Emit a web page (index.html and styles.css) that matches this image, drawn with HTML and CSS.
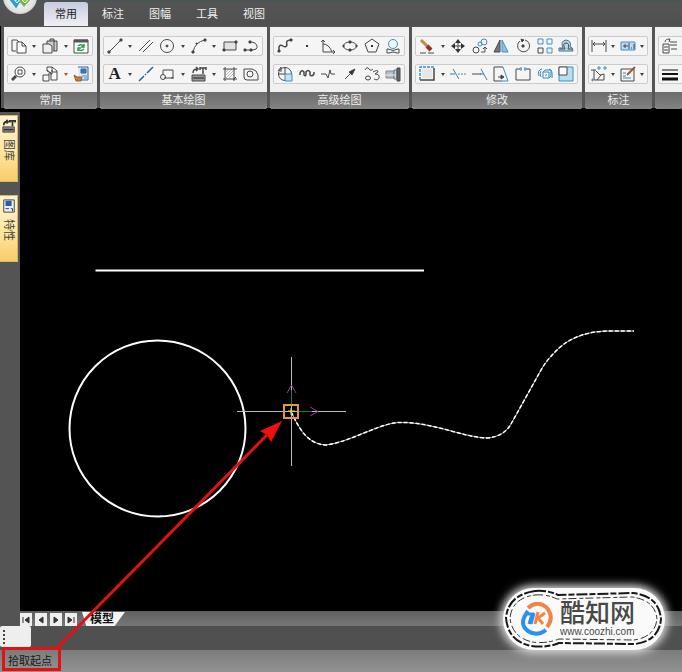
FILE: index.html
```html
<!DOCTYPE html>
<html lang="zh-CN">
<head>
    <meta charset="UTF-8">
    <meta name="viewport" content="width=device-width, initial-scale=1.0">
    <title>CAD</title>
    <link rel="stylesheet" href="styles.css">
</head>
<body>
    <header class="header">
        <button class="app-logo" aria-label="菜单">
            <svg width="34" height="34" viewBox="0 0 34 34">
                <path d="M7 17l6 8 5-8" stroke="#2f9fd0" stroke-width="4"/>
                <path d="M16 18l5 6 7-8" stroke="#79b843" stroke-width="4"/>
                <path d="M9 17l5 6 4-5M17 18l5 5 5-6" stroke="#fff" stroke-width="1"/>
            </svg>
        </button>
        <nav class="tabs">
            <button class="tab active">常用</button>
            <button class="tab">标注</button>
            <button class="tab">图幅</button>
            <button class="tab">工具</button>
            <button class="tab">视图</button>
        </nav>
    </header>

    <div class="ribbon">
        <section class="panel">
            <div class="panel-body">
                <div class="group">
                    <button class="icon" aria-label="复制"><svg viewBox="0 0 16 16"><path d="M5 13H1V2h5l2 2"/><path d="M6 4h5l4 4v7H6zM11 4v4h4" fill="#fff"/></svg></button>
                    <button class="caret" aria-label="更多"></button>
                    <button class="icon" aria-label="粘贴"><svg viewBox="0 0 16 16"><path d="M5 6V3h3V1h4v2h3v10h-4" fill="#ccc"/><path d="M1 6h6l3 2v7H1z" fill="#eee"/><path d="M12 3v10M8 3h5"/></svg></button>
                    <button class="caret" aria-label="更多"></button>
                    <button class="icon" aria-label="刷新"><svg viewBox="0 0 16 16"><path d="M1 2h14v13H1z" fill="#fff"/><path d="M1 3h14" stroke="#555" stroke-width="3"/><path d="M5 8q3-3 6 1M11 6v3H8M11 11q-3 3-6 0M5 13v-3h3" stroke="#249b53" stroke-width="1.5"/></svg></button>
                </div>
                <div class="group">
                    <button class="icon" aria-label="显示窗口"><svg viewBox="0 0 16 16"><circle cx="9" cy="6" r="5" fill="#fff"/><path d="M7 4h4v4H7z"/><path d="M5 10l-4 4" stroke-width="3"/></svg></button>
                    <button class="caret" aria-label="更多"></button>
                    <button class="icon" aria-label="移动复制"><svg viewBox="0 0 16 16"><path d="M5 1h5l5 4v9H9V7L5 5z" fill="#fff"/><path d="M1 9h6v6H1zM10 1v5h5M5 4l5 4M10 4v4H6"/></svg></button>
                    <button class="caret warm" aria-label="更多"></button>
                    <button class="icon" aria-label="特性匹配"><svg viewBox="0 0 16 16"><path d="M5 1h10v13H6" fill="#dbe9f6" stroke="#35669b"/><path d="M8 3h5v4H8z" fill="#3979bb" stroke="#35669b"/><path d="M9 10h5M11 12h3" class="b"/><path d="M1 9l3 2h5l-1 4H3z" fill="#c77e38" stroke="#9b5a27"/></svg></button>
                </div>
            </div>
            <h2 class="panel-title">常用</h2>
        </section>

        <section class="panel">
            <div class="panel-body">
                <div class="group">
                    <button class="icon" aria-label="直线"><svg viewBox="0 0 16 16"><path d="M2 14L14 2"/><path d="M1 13h2v2H1zM13 1h2v2h-2z" class="f"/></svg></button>
                    <button class="caret" aria-label="更多"></button>
                    <button class="icon" aria-label="平行线"><svg viewBox="0 0 16 16"><path d="M1 13L12 2M5 14L15 4"/></svg></button>
                    <button class="icon" aria-label="圆"><svg viewBox="0 0 16 16"><circle cx="8" cy="8" r="6.5"/><circle cx="8" cy="8" r="1" class="f"/></svg></button>
                    <button class="caret" aria-label="更多"></button>
                    <button class="icon" aria-label="圆弧"><svg viewBox="0 0 16 16"><path d="M2 14Q4 4 14 2"/><path d="M1 13h2v2H1zM13 1h2v2h-2zM5 5h1v1H5z" class="f"/></svg></button>
                    <button class="caret" aria-label="更多"></button>
                    <button class="icon" aria-label="矩形"><svg viewBox="0 0 16 16"><path d="M2 4h12v8H2z" fill="#e2e2e2"/><path d="M1 11h2v2H1zM13 3h2v2h-2z" class="f"/></svg></button>
                    <button class="icon" aria-label="多段线"><svg viewBox="0 0 16 16"><path d="M2 12h6M8 12q7 0 6-4-1-4-7-4"/><path d="M1 11h2v2H1zM7 11h2v2H7zM6 3h2v2H6z" class="f"/></svg></button>
                </div>
                <div class="group">
                    <button class="icon letter" aria-label="文字">A</button>
                    <button class="caret" aria-label="更多"></button>
                    <button class="icon" aria-label="中心线"><svg viewBox="0 0 16 16"><path d="M1 15l5-5M7 9l1-1M9 7l6-6" stroke="#2c5f9e" stroke-width="1.5"/></svg></button>
                    <button class="icon" aria-label="引出块"><svg viewBox="0 0 16 16"><path d="M4 9V4h10v8H5M12 12h3"/><circle cx="4" cy="11" r="2.5"/></svg></button>
                    <button class="caret" aria-label="更多"></button>
                    <button class="icon" aria-label="图库"><svg viewBox="0 0 16 16"><path d="M1 9h13v6H1z" fill="#999"/><path d="M2 12h11M2 7q0-4 4-4M5 1l2 2-2 2M9 2h6M12 2v6M9 1v3M15 1v3" stroke-width="1.5"/></svg></button>
                    <button class="caret" aria-label="更多"></button>
                    <button class="icon" aria-label="剖面线"><svg viewBox="0 0 16 16"><path d="M4 6l3-3M4 9l6-6M4 12l8-8M7 12l5-5" stroke="#bbb"/><path d="M3 1v14M12 1v14M1 3h14M1 13h14M11 14l3-3"/></svg></button>
                    <button class="icon" aria-label="轮廓"><svg viewBox="0 0 16 16"><path d="M1 3h8q5 1 6 6v5H4q-3 0-3-3z"/><circle cx="7" cy="8" r="3"/></svg></button>
                </div>
            </div>
            <h2 class="panel-title">基本绘图</h2>
        </section>

        <section class="panel">
            <div class="panel-body">
                <div class="group">
                    <button class="icon" aria-label="样条"><svg viewBox="0 0 16 16"><path d="M2 14V9q1-3 4-1t4-1q-2-5 4-5" stroke-width="1.5"/><path d="M1 12h2v2H1zM13 1h2v2h-2z" class="f"/></svg></button>
                    <button class="icon" aria-label="点"><svg viewBox="0 0 16 16"><path d="M7 7h2v2H7z" class="f" stroke="none"/></svg></button>
                    <button class="icon" aria-label="公式曲线"><svg viewBox="0 0 16 16"><path d="M3 2v12h12M3 6q6 0 9 8M1 4l2-2 2 2M13 12l2 2-2 2"/></svg></button>
                    <button class="icon" aria-label="椭圆"><svg viewBox="0 0 16 16"><ellipse cx="8" cy="8" rx="6.5" ry="4"/><path d="M7 3h2v2H7zM1 7h1v2H1zM14 7h1v2h-1zM7 11h2v2H7z" class="f"/></svg></button>
                    <button class="icon" aria-label="正多边形"><svg viewBox="0 0 16 16"><path d="M8 1l7 5-3 8H4L1 6z"/><path d="M7 7h2v2H7z" class="f" stroke="none"/></svg></button>
                    <button class="icon" aria-label="圆弧拟合"><svg viewBox="0 0 16 16"><circle cx="8" cy="6" r="4.5" class="b" fill="#eef7fd"/><path d="M2 15v-4h1q5 3 10 0h1v4M2 15h2q4-2 8 0h2"/></svg></button>
                </div>
                <div class="group">
                    <button class="icon" aria-label="局部放大"><svg viewBox="0 0 16 16"><circle cx="8" cy="8" r="6.5"/><path d="M8 8h7v7H8z" fill="#bfe2f4" class="b"/><path d="M1 5l3-4v5M8 1v7M1 8h7"/></svg></button>
                    <button class="icon" aria-label="波浪线"><svg viewBox="0 0 16 16"><path d="M1 9V7q2-4 4-1v3q2 2 2-1V6q2-3 4 0v3q2 2 4-1V6" stroke-width="1.5"/></svg></button>
                    <button class="icon" aria-label="双折线"><svg viewBox="0 0 16 16"><path d="M1 8h5l2 4 2-8 1 4h4"/></svg></button>
                    <button class="icon" aria-label="箭头"><svg viewBox="0 0 16 16"><path d="M3 13l6-6"/><path d="M13 3L7 6l3 3z" class="f"/></svg></button>
                    <button class="icon" aria-label="云线"><svg viewBox="0 0 16 16"><path d="M1 4q2-4 4-1t4 0M9 6q5-3 5 0l-3 2q5 0 4 4-1 3-5 1"/><ellipse cx="4" cy="12" rx="2.5" ry="2"/></svg></button>
                    <button class="icon" aria-label="孔轴"><svg viewBox="0 0 16 16"><path d="M1 5h8v7H1z" fill="#b5bcc4" stroke="#888"/><path d="M9 4h3v9H9z" fill="#b9d8e9" stroke="#678"/><path d="M12 2h3v13h-3z" fill="#666"/><path d="M0 9h11" stroke="#eee"/></svg></button>
                </div>
            </div>
            <h2 class="panel-title">高级绘图</h2>
        </section>

        <section class="panel">
            <div class="panel-body">
                <div class="group">
                    <button class="icon" aria-label="删除"><svg viewBox="0 0 16 16"><path d="M2 2l7 7" stroke="#c08a4a" stroke-width="3"/><path d="M8 8l4 4" stroke="#8b3522" stroke-width="4"/><path d="M1 15h14" stroke-dasharray="6 2"/></svg></button>
                    <button class="caret" aria-label="更多"></button>
                    <button class="icon" aria-label="平移"><svg viewBox="0 0 16 16"><path d="M8 2v12M2 8h12"/><path d="M8 1l3 4H5zM8 15l3-4H5zM1 8l4-3v6zM15 8l-4-3v6z" class="f" stroke="none"/></svg></button>
                    <button class="icon" aria-label="平移复制"><svg viewBox="0 0 16 16"><circle cx="4" cy="12" r="3"/><circle cx="12" cy="4" r="3" class="b"/><circle cx="8" cy="6" r="2" class="b"/><path d="M9 14h4v-4M11 11l2-2 2 2"/></svg></button>
                    <button class="icon" aria-label="镜像"><svg viewBox="0 0 16 16"><path d="M7 2v12H1z" fill="#777"/><path d="M9 2v12h6z" fill="#8fc5e4" class="b"/></svg></button>
                    <button class="icon" aria-label="旋转"><svg viewBox="0 0 16 16"><path d="M10 2a6 6 0 1 1-5 1"/><path d="M6 1l3 1-2 2zM7 7h2v2H7z" class="f"/></svg></button>
                    <button class="icon" aria-label="阵列"><svg viewBox="0 0 16 16"><path d="M1 1h5v5H1zM10 1h5v5h-5zM10 10h5v5h-5z" class="b"/><path d="M1 10h5v5H1z"/></svg></button>
                    <button class="icon" aria-label="等距线"><svg viewBox="0 0 16 16"><path d="M1 13v-3h4Q2 3 8 2q6 1 4 7 3 0 3 4z" fill="#b4d9ea" stroke="#38739b"/><path d="M2 11h5Q4 5 8 5q4 0 2 6h4"/></svg></button>
                </div>
                <div class="group">
                    <button class="icon" aria-label="裁剪"><svg viewBox="0 0 16 16"><path d="M1 14V1h14" stroke="#3a91c5" stroke-width="1.5" stroke-dasharray="3 1"/><path d="M15 2v12H1" stroke-width="1.5"/><path d="M3 3h10v9H3z" fill="#e6e6e6" stroke="none"/></svg></button>
                    <button class="caret" aria-label="更多"></button>
                    <button class="icon" aria-label="打断"><svg viewBox="0 0 16 16"><path d="M0 8h5M3 3l6 10" stroke="#387caf"/><path d="M8 8h8" stroke-dasharray="2 1" class="b"/></svg></button>
                    <button class="icon" aria-label="延伸"><svg viewBox="0 0 16 16"><path d="M0 8h9"/><path d="M8 8h4M9 3l6 11" stroke="#387caf"/></svg></button>
                    <button class="icon" aria-label="拉伸"><svg viewBox="0 0 16 16"><path d="M10 1H1v14h8"/><path d="M10 1l5 14H9" class="b"/><path d="M5 11h5M8 9l3 2-3 2z" class="f"/></svg></button>
                    <button class="icon" aria-label="打断于点"><svg viewBox="0 0 16 16"><path d="M5 3H1v11h14V3h-4"/><path d="M4 3h3M9 3h3M6 1v4M10 1v4" class="b"/></svg></button>
                    <button class="icon" aria-label="分解"><svg viewBox="0 0 16 16"><path d="M6 6h6v6H6zM6 6l2-2h6v6l-2 2M8 9h2" stroke="#2f8dbd"/><path d="M5 3Q0 4 2 10M4 5Q2 7 4 11M12 3q4 1 3 9" stroke="#2f8dbd"/></svg></button>
                    <button class="icon" aria-label="缩放"><svg viewBox="0 0 16 16"><path d="M1 1h14v14H1z" fill="#b8dff0" class="b"/><path d="M1 1h8v8H1z" fill="#fff"/></svg></button>
                </div>
            </div>
            <h2 class="panel-title">修改</h2>
        </section>

        <section class="panel">
            <div class="panel-body">
                <div class="group">
                    <button class="icon" aria-label="尺寸标注"><svg viewBox="0 0 16 16"><path d="M1 2v12M15 2v12M2 6h12M4 4L2 6l2 2M12 4l2 2-2 2"/></svg></button>
                    <button class="caret" aria-label="更多"></button>
                    <button class="icon" aria-label="形位公差"><svg viewBox="0 0 16 16"><path d="M1 4h14v8H1z" fill="#b8dcf1" class="b"/><path d="M3 8h5M5 6v4M9 5v6M11 10h1M14 6v5"/></svg></button>
                    <button class="caret" aria-label="更多"></button>
                </div>
                <div class="group">
                    <button class="icon" aria-label="坐标标注"><svg viewBox="0 0 16 16"><path d="M3 4v10h10V8L9 9 5 5M0 4h5M6 14l4-5"/><path d="M7 1h2v2H7zM13 1h2v2h-2zM1 13h1v2H1z" class="b"/></svg></button>
                    <button class="caret" aria-label="更多"></button>
                    <button class="icon" aria-label="标注编辑"><svg viewBox="0 0 16 16"><path d="M1 3h13v12H1z" fill="#f3f3f3"/><path d="M3 7h3M3 10h3M3 12h8" class="b"/><path d="M15 1L7 9" stroke="#985a38" stroke-width="2"/></svg></button>
                    <button class="caret" aria-label="更多"></button>
                </div>
            </div>
            <h2 class="panel-title">标注</h2>
        </section>

        <section class="panel cut">
            <div class="panel-body">
                <div class="group">
                    <button class="icon" aria-label="图层"><svg viewBox="0 0 16 16"><path d="M1 6h6v9H1zM2 9h4M2 12h4M8 4h7M8 7h7M9 11h6M3 4q0-3 5-3l-1 3"/></svg></button>
                </div>
                <div class="group">
                    <button class="icon" aria-label="线宽"><svg viewBox="0 0 16 16"><path d="M0 4h16" stroke="#111"/><path d="M0 8h16" stroke="#111" stroke-width="2"/><path d="M0 13h16" stroke="#111" stroke-width="3"/></svg></button>
                </div>
            </div>
            <h2 class="panel-title"></h2>
        </section>
    </div>

    <main class="workspace">
        <aside class="sidebar">
            <button class="side-tab">
                <svg viewBox="0 0 16 16"><path d="M1 9h13v6H1z" fill="#999"/><path d="M2 12h11M2 7q0-4 4-4M5 1l2 2-2 2M9 2h6M12 2v6M9 1v3M15 1v3" stroke-width="2"/></svg>
                <span>图库</span>
            </button>
            <button class="side-tab">
                <svg viewBox="0 0 16 16"><path d="M2 1h12v14H2z" fill="#e8eff8"/><path d="M4 2h7v6H4z" fill="#235fae" stroke="none"/><path d="M4 11h4M10 11h2v3"/></svg>
                <span>特性</span>
            </button>
        </aside>
        <div class="canvas">
            <svg width="662" height="499" viewBox="20 112 662 499">
                <path d="M95.500 270.500H424" stroke="#fff" stroke-width="2"/>
                <circle cx="157.500" cy="428.500" r="88" stroke="#fff" stroke-width="2"/>
                <!-- spline being edited -->
                <path d="M291 412C297 422 304 444 326 445C350 442 378 424 398 422.500C430 421 465 438 487 438C500 437 507 431 511 424L541 370C546 361 552 355 558 349C572 336 590 331 610 331H634" stroke="#bbb" stroke-width="1"/>
                <path d="M291 412C297 422 304 444 326 445C350 442 378 424 398 422.500C430 421 465 438 487 438C500 437 507 431 511 424L541 370C546 361 552 355 558 349C572 336 590 331 610 331H634" stroke="#fff" stroke-width="1.500" stroke-dasharray="4 2"/>
                <!-- crosshair with ucs axes -->
                <path d="M237 411.500H346M291.500 357V466" stroke="#bbb"/>
                <path d="M298 411.500H312M291.500 405V390" stroke="#197b32"/>
                <path d="M310 407l8 4.500-8 4.500M287 393l4.500-8 4.500 8" stroke="#8b3b98"/>
                <path d="M284 405h14v13h-14z" stroke="#e59a31" stroke-width="2"/>
                <path d="M288 411h7M291 408v7" stroke="#e4d34a"/>
            </svg>
        </div>
    </main>

    <div class="sheet-bar">
        <div class="sheet-nav">
            <button aria-label="第一页"><svg viewBox="0 0 12 12"><path d="M3 3v6M9 3L5 6l4 3z"/></svg></button>
            <button aria-label="上一页"><svg viewBox="0 0 12 12"><path d="M8 3L4 6l4 3z"/></svg></button>
            <button aria-label="下一页"><svg viewBox="0 0 12 12"><path d="M4 3l4 3-4 3z"/></svg></button>
            <button aria-label="最后一页"><svg viewBox="0 0 12 12"><path d="M9 3v6M3 3l4 3-4 3z"/></svg></button>
        </div>
        <button class="sheet-tab">模型</button>
    </div>
    <div class="toolbar-row">
        <div class="grip"></div>
    </div>
    <footer class="status-bar">拾取起点</footer>

    <svg class="annotation" width="300" height="260" viewBox="0 412 300 260">
        <path d="M3.500 648.500h56v21h-56z" stroke="#e01212" stroke-width="3"/>
        <path d="M57 648L267 435" stroke="#e01212" stroke-width="3"/>
        <path d="M282 421L271 442 267 435 260 431z" fill="#f01010"/>
    </svg>

    <div class="watermark">
        <svg class="stitch" width="162" height="62" viewBox="0 0 162 62">
            <path d="M32 3Q45 2 55 7L130 5Q156 8 158 31Q156 53 132 56L56 55Q44 60 28 58Q5 53 3 30Q5 7 32 3z" stroke="#181818" stroke-width="2" stroke-dasharray="11 2 6 2"/>
            <path d="M32 7Q44 6 54 11L129 9Q152 12 154 31Q152 49 131 52L56 51Q43 56 29 54Q9 49 7 30Q9 10 32 7z" stroke="#333" stroke-width="1" stroke-dasharray="8 3 4 2"/>
        </svg>
        <svg class="mark" width="32" height="34" viewBox="0 0 32 34">
            <path d="M7 6Q16-2 25 5Q34 15 26 25" stroke="#f58345" stroke-width="4"/>
            <path d="M7 9Q-3 22 7 29Q16 35 25 28" stroke="#2b91ec" stroke-width="4"/>
            <path d="M6 12h5l-3 10M13 11l-3 11" stroke="#2b91ec" stroke-width="3"/>
            <path d="M17 10l-3 12M24 11l-7 5 5 6" stroke="#f58345" stroke-width="3"/>
        </svg>
        <div class="brand">
            <strong>酷知网</strong>
            <span>www.coozhi.com</span>
        </div>
    </div>
</body>
</html>
```
FILE: styles.css
```css
* {
    box-sizing: border-box;
}

body {
    margin: 0;
    min-height: 100vh;
    display: flex;
    flex-direction: column;
    position: relative;
    overflow: hidden;
    background: #000;
    font-family: "Liberation Sans", "Noto Sans CJK SC", sans-serif;
    font-size: 11px;
    line-height: 16px;
}

button {
    margin: 0;
    padding: 0;
    border: none;
    background: none;
    font: inherit;
    color: inherit;
}

svg {
    display: block;
    fill: none;
}

/* header */
.header {
    position: relative;
    height: 26px;
    padding-left: 44px;
    background: linear-gradient(#4a5555, #545454 4px, #505050);
    display: flex;
    align-items: flex-end;
}

.app-logo {
    position: absolute;
    left: 3px;
    top: -20px;
    width: 34px;
    height: 34px;
    border-radius: 50%;
    background: radial-gradient(#fff, #e4e4e4 60%, #999);
}

.tabs {
    display: flex;
    gap: 3px;
    align-items: flex-end;
}

.tab {
    width: 44px;
    height: 24px;
    color: #f0f0f0;
}

.tab.active {
    color: #222;
    background: linear-gradient(#c6cbe0, #f0f0f4);
    border-radius: 3px 3px 0 0;
}

/* ribbon */
.ribbon {
    display: grid;
    grid-template-columns: 93px 167px 139px 170px 67px 1fr;
    gap: 3px;
    height: 86px;
    padding: 1px 0 3px 3px;
    background: linear-gradient(#555 82px, #000 82px);
    border-left: 1px solid #000;
}

.panel {
    min-width: 0;
    overflow: hidden;
    border-radius: 0 0 3px 3px;
    background: #f0f0f0;
    display: flex;
    flex-direction: column;
}

.panel-body {
    flex: 1;
    padding: 9px 4px 0 3px;
    display: flex;
    flex-direction: column;
    gap: 8px;
}

.group {
    height: 20px;
    display: flex;
    align-items: center;
    border: 1px solid #ccc;
    border-radius: 2px;
    background: #f5f5f5;
}

.icon {
    flex: 0 1 22px;
    min-width: 0;
    height: 18px;
    display: flex;
    align-items: center;
    justify-content: center;
}

.icon svg {
    flex: none;
    width: 16px;
    height: 16px;
    stroke: #484848;
    stroke-width: 1;
}

.icon .b {
    stroke: #3c91c4;
}

.icon .f {
    fill: #333;
}

.letter {
    font-family: "Liberation Serif", serif;
    font-size: 17px;
    font-weight: bold;
    color: #222;
}

.caret {
    flex: 0 1 10px;
    height: 18px;
    display: flex;
    align-items: center;
    justify-content: center;
}

.caret::before {
    content: "";
    border: 2px solid transparent;
    border-top: 3px solid #444;
    border-bottom: 0;
}

.caret.warm::before {
    border-top-color: #8b6530;
}

.panel-title {
    height: 17px;
    margin: 0;
    background: linear-gradient(#6c6c6c, #828282);
    color: #eee;
    font-size: 11px;
    font-weight: normal;
    text-align: center;
}

.cut .panel-body {
    padding-right: 0;
}

.cut .group {
    border-right: 0;
    border-radius: 2px 0 0 2px;
}

/* drawing area */
.workspace {
    flex: 1;
    display: flex;
    min-height: 0;
}

.sidebar {
    width: 20px;
    padding-top: 3px;
    background: #545454;
    display: flex;
    flex-direction: column;
    gap: 13px;
}

.side-tab {
    width: 18px;
    height: 67px;
    padding: 3px 1px;
    background: linear-gradient(#fff3cf, #ffe9a5 50%, #f8cd68);
    border: 1px solid #d9b765;
    border-left: 0;
    color: #444;
    display: flex;
    flex-direction: column;
    align-items: center;
    gap: 6px;
}

.side-tab svg {
    width: 14px;
    height: 14px;
    stroke: #333;
}

.side-tab span {
    writing-mode: vertical-rl;
    text-orientation: sideways;
}

.canvas {
    flex: 1;
    min-width: 0;
    overflow: hidden;
    background: #000;
}

/* bottom bars */
.sheet-bar {
    height: 15px;
    background: linear-gradient(#606060, #777);
    border-left: 20px solid #545454;
    display: flex;
    align-items: flex-end;
    gap: 5px;
}

.sheet-nav {
    display: flex;
    gap: 3px;
}

.sheet-nav button {
    width: 12px;
    height: 13px;
    background: #eee;
}

.sheet-nav svg {
    width: 12px;
    height: 12px;
    fill: #333;
    stroke: #333;
}

.sheet-tab {
    width: 43px;
    height: 14px;
    padding: 0 8px;
    background: #f4f4f4;
    clip-path: polygon(0 0, 100% 0, 76% 100%, 10% 100%);
    color: #111;
    font-size: 12px;
    font-weight: bold;
    line-height: 14px;
    text-align: left;
    white-space: nowrap;
}

.toolbar-row {
    height: 24px;
    background: #505050;
}

.grip {
    width: 31px;
    height: 21px;
    padding: 4px 3px;
    border-radius: 2px;
    background: #eee;
}

.grip::before {
    content: "";
    display: block;
    height: 14px;
    border-left: 2px dotted #444;
}

.status-bar {
    height: 22px;
    padding-left: 8px;
    background: linear-gradient(#7c7c7c, #929292);
    color: #181818;
    line-height: 22px;
}

.annotation {
    position: absolute;
    left: 0;
    bottom: 0;
    pointer-events: none;
}

.watermark {
    position: absolute;
    right: 17px;
    bottom: 22px;
    width: 162px;
    height: 62px;
    padding-left: 18px;
    border-radius: 31px;
    background: #fafafa;
    box-shadow: 0 0 8px 3px #ddd;
    display: flex;
    align-items: center;
    gap: 7px;
}

.stitch {
    position: absolute;
    left: 0;
    top: 0;
}

.mark,
.brand {
    position: relative;
}

.brand {
    display: flex;
    flex-direction: column;
    color: #484848;
}

.brand strong {
    font-size: 25px;
    font-weight: 500;
    line-height: 26px;
}

.brand span {
    font-size: 10px;
    line-height: 12px;
}
```
